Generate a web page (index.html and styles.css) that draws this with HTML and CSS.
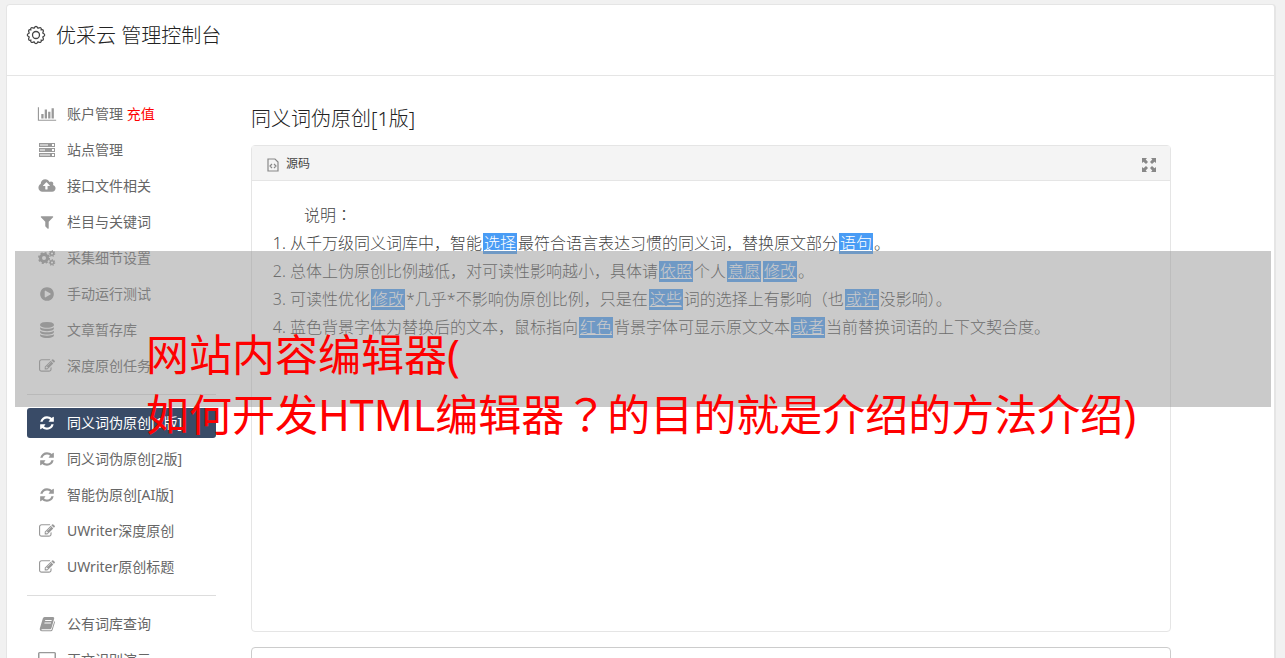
FILE: index.html
```html
<!DOCTYPE html>
<html lang="zh-CN">
<head>
  <meta charset="UTF-8">
  <meta name="viewport" content="width=device-width, initial-scale=1.0">
  <title>优采云 管理控制台</title>
  <link rel="stylesheet" href="styles.css">
</head>
<body>

  <!-- shared icons -->
  <svg class="sprite" aria-hidden="true">
    <symbol id="i-refresh" viewBox="0 0 1792 1792"><path d="M1639 1056q0 5-1 7-64 268-268 434.500t-478 166.500q-146 0-282.500-55t-243.500-157l-129 129q-19 19-45 19t-45-19-19-45v-448q0-26 19-45t45-19h448q26 0 45 19t19 45-19 45l-137 137q71 66 161 102t187 36q134 0 250-65t186-179q11-17 53-117 8-23 30-23h192q13 0 22.500 9.500t9.500 22.500zm25-800v448q0 26-19 45t-45 19h-448q-26 0-45-19t-19-45 19-45l138-138q-148-137-349-137-134 0-250 65t-186 179q-11 17-53 117-8 23-30 23h-199q-13 0-22.500-9.500t-9.500-22.500v-7q65-268 270-434.500t480-166.500q146 0 284 55.500t245 156.500l130-129q19-19 45-19t45 19 19 45z"/></symbol>
    <symbol id="i-edit" viewBox="0 0 1792 1792"><path d="M888 1184l116-116-152-152-116 116v56h96v96h56zm440-720q-16-16-33 1l-350 350q-17 17-1 33t33-1l350-350q17-17 1-33zm80 594v190q0 119-84.500 203.500t-203.500 84.500h-832q-119 0-203.500-84.500t-84.500-203.500v-832q0-119 84.500-203.500t203.500-84.500h832q63 0 117 25 15 7 18 23 3 17-9 29l-49 49q-14 14-32 8-23-6-45-6h-832q-66 0-113 47t-47 113v832q0 66 47 113t113 47h832q66 0 113-47t47-113v-126q0-13 9-22l64-64q15-15 35-7t20 29zm-96-738l288 288-672 672h-288v-288zm444 132l-92 92-288-288 92-92q28-28 68-28t68 28l152 152q28 28 28 68t-28 68z"/></symbol>
  </svg>

  <div class="page">
    <header class="page-header">
      <svg class="header-icon" viewBox="0 0 20 20" aria-hidden="true">
        <path d="M8 3.200Q10-.600 12 3.200Q15.800 1.500 15.200 4.800Q18.500 4.200 16.800 8Q20.600 10 16.800 12Q18.500 15.800 15.200 15.200Q15.800 18.500 12 16.800Q10 20.600 8 16.800Q4.200 18.500 4.800 15.200Q1.500 15.800 3.200 12Q-.600 10 3.200 8Q1.500 4.200 4.800 4.800Q4.200 1.500 8 3.200Z"/>
        <circle cx="10" cy="10" r="3.500"/>
      </svg>
      <h1>优采云 管理控制台</h1>
    </header>

    <div class="content">
      <nav class="sidebar">
        <ul>
          <li><a href="#">
            <svg viewBox="0 0 2048 1792"><path d="M640 896v512h-256v-512h256zm384-512v1024h-256v-1024h256zm1024 1152v128h-2048v-1536h128v1408h1920zm-640-896v768h-256v-768h256zm384-384v1152h-256v-1152h256z"/></svg>
            <span>账户管理 <em>充值</em></span></a></li>
          <li><a href="#">
            <svg viewBox="0 0 18 16"><path fill-rule="evenodd" d="M1 1h16v4H1zM2 2.500v1h8v-1zM14 2v2h2V2zM1 6h16v4H1zM2 7.500v1h5v-1zM14 7v2h2V7zM1 11h16v4H1zM2 12.500v1h10v-1zM14 12v2h2v-2z"/></svg>
            <span>站点管理</span></a></li>
          <li><a href="#">
            <svg viewBox="-64 0 1920 1792"><path d="M1216 864q0-14-9-23l-352-352q-9-9-23-9t-23 9l-351 351q-10 12-10 24 0 14 9 23t23 9h224v352q0 13 9.500 22.500t22.500 9.500h192q13 0 22.500-9.500t9.500-22.500v-352h224q13 0 22.500-9.500t9.500-22.500zm640 288q0 159-112.500 271.500t-271.500 112.500h-1088q-185 0-316.500-131.500T-64 1088q0-130 70-240t188-165q-2-30-2-43 0-212 150-362t362-150q156 0 285.500 87t188.500 231q71-62 166-62 106 0 181 75t75 181q0 76-41 138 130 31 213.500 135.500T1856 1152z"/></svg>
            <span>接口文件相关</span></a></li>
          <li><a href="#">
            <svg viewBox="0 0 1792 1792"><path d="M1595 295q17 41-14 70l-493 493v742q0 42-39 59-13 5-25 5-27 0-45-19l-256-256q-19-19-19-45v-486l-493-493q-31-29-14-70 17-39 59-39h1280q42 0 59 39z"/></svg>
            <span>栏目与关键词</span></a></li>
          <li><a href="#">
            <svg class="gears" viewBox="0 0 18 16"><circle cx="6" cy="8" r="3.500" stroke-width="3"/><circle class="teeth" cx="6" cy="8" r="5" stroke-width="2" stroke-dasharray="2 1.930"/><circle cx="14" cy="3.500" r="1.800" stroke-width="1.400"/><circle class="teeth" cx="14" cy="3.500" r="2.700" stroke-width="1.200" stroke-dasharray="1.200 1.220"/><circle cx="14" cy="12.500" r="1.800" stroke-width="1.400"/><circle class="teeth" cx="14" cy="12.500" r="2.700" stroke-width="1.200" stroke-dasharray="1.200 1.220"/></svg>
            <span>采集细节设置</span></a></li>
          <li><a href="#">
            <svg viewBox="0 0 1792 1792"><path d="M896 128q209 0 385.500 103t279.500 279.500 103 385.500-103 385.500-279.500 279.500-385.500 103-385.500-103-279.500-279.500-103-385.500 103-385.500 279.500-279.500 385.500-103zm384 823q32-18 32-55t-32-55l-544-320q-31-19-64-1-32 19-32 56v640q0 37 32 56 16 8 32 8 17 0 32-9z"/></svg>
            <span>手动运行测试</span></a></li>
          <li><a href="#">
            <svg viewBox="0 0 1792 1792"><path d="M896 768q237 0 443-43t325-127v170q0 69-103 128t-280 93.500-385 34.500-385-34.500-280-93.500-103-128v-170q119 84 325 127t443 43zm0 768q237 0 443-43t325-127v170q0 69-103 128t-280 93.500-385 34.500-385-34.500-280-93.500-103-128v-170q119 84 325 127t443 43zm0-384q237 0 443-43t325-127v170q0 69-103 128t-280 93.500-385 34.500-385-34.500-280-93.500-103-128v-170q119 84 325 127t443 43zm0-1152q208 0 385 34.500t280 93.500 103 128v128q0 69-103 128t-280 93.500-385 34.500-385-34.500-280-93.500-103-128v-128q0-69 103-128t280-93.500 385-34.500z"/></svg>
            <span>文章暂存库</span></a></li>
          <li><a href="#"><svg><use href="#i-edit"/></svg><span>深度原创任务</span></a></li>
        </ul>
        <hr>
        <ul>
          <li><a href="#" class="active"><svg><use href="#i-refresh"/></svg><span>同义词伪原创[1版]</span></a></li>
          <li><a href="#"><svg><use href="#i-refresh"/></svg><span>同义词伪原创[2版]</span></a></li>
          <li><a href="#"><svg><use href="#i-refresh"/></svg><span>智能伪原创[AI版]</span></a></li>
          <li><a href="#"><svg><use href="#i-edit"/></svg><span>UWriter深度原创</span></a></li>
          <li><a href="#"><svg><use href="#i-edit"/></svg><span>UWriter原创标题</span></a></li>
        </ul>
        <hr>
        <ul>
          <li><a href="#">
            <svg viewBox="0 0 16 16"><path fill-rule="evenodd" d="M5.500 1H14q1.500.200 1.200 1.500L12.500 12q-.400 1.200-1.500 1.200H3.200q-1 0-.900.600.200.500 1 .500h8.400q.800 0 1-.700L15.400 5q.800.600.500 1.500l-2.400 7.800q-.400 1-1.500 1H3Q.500 15.200.800 12.500L3.800 2.500Q4.200 1 5.500 1zM6.300 4l-.300 1h6.500l.300-1zM5.600 6.400l-.300 1h6.500l.300-1z"/></svg>
            <span>公有词库查询</span></a></li>
          <li><a href="#">
            <svg viewBox="0 0 18 16"><path fill-rule="evenodd" d="M1.500 0h15Q18 0 18 1.500v10q0 1.500-1.500 1.500H11l1 2v1H6v-1l1-2H1.500Q0 13 0 11.500v-10Q0 0 1.500 0zM1.500 1.200v8.600h15V1.200z"/></svg>
            <span>正文识别演示</span></a></li>
        </ul>
      </nav>

      <main class="main">
        <h2>同义词伪原创[1版]</h2>

        <section class="editor">
          <div class="toolbar">
            <button type="button" class="btn-source">
              <svg viewBox="0 0 12 14" aria-hidden="true"><path d="M1 1h7l3 3v9H1zM5 6L3 8l2 2M7 6l2 2-2 2"/></svg>
              源码
            </button>
            <button type="button" class="btn-full" aria-label="全屏">
              <svg viewBox="0 0 14 14" aria-hidden="true"><path d="M0 0h5L3.700 1.500 6 4 4 6 1.500 3.700 0 5zM14 0v5l-1.500-1.300L10 6 8 4l2.300-2.500L9 0zM0 14V9l1.500 1.300L4 8l2 2-2.300 2.500L5 14zM14 14H9l1.300-1.500L8 10l2-2 2.500 2.300L14 9z"/></svg>
            </button>
          </div>
          <div class="editor-body">
            <p>说明<span class="mid" lang="zh-TW">：</span></p>
            <ol>
              <li>从千万级同义词库中，智能<u>选择</u>最符合语言表达习惯的同义词，替换原文部分<u>语句</u>。</li>
              <li>总体上伪原创比例越低，对可读性影响越小，具体请<u>依照</u>个人<u>意愿</u><u>修改</u>。</li>
              <li>可读性优化<u>修改</u>*几乎*不影响伪原创比例，只是在<u>这些</u>词的选择上有影响<span class="mid" lang="zh-TW">（</span>也<u>或许</u>没影响<span class="mid" lang="zh-TW">）</span>。</li>
              <li>蓝色背景字体为替换后的文本，鼠标指向<u>红色</u>背景字体可显示原文文本<u>或者</u>当前替换词语的上下文契合度。</li>
            </ol>
          </div>
        </section>

        <textarea class="result" aria-label="结果"></textarea>
      </main>
    </div>
  </div>

  <!-- caption over the page -->
  <div class="shade"></div>
  <div class="caption">网站内容编辑器(<br>如何开发HTML编辑器<span class="mid" lang="zh-TW">？</span>的目的就是介绍的方法介绍)</div>

</body>
</html>
```
FILE: styles.css
```css
* {
  box-sizing: border-box;
}

body {
  position: relative;
  height: 100vh;
  margin: 0;
  padding: 4px 9px 0 6px;
  overflow: hidden;
  background: #f1f1f1;
  color: #666;
  font-family: "Noto Sans", "Noto Sans CJK SC", sans-serif;
  font-size: 14px;
}

h1, h2 {
  margin: 0;
  color: #222;
  font-size: 20px;
  font-weight: 300;
  line-height: 30px;
}

ul, ol {
  margin: 0;
  padding: 0;
}

button {
  border: none;
  padding: 0;
  background: none;
  color: inherit;
  font: inherit;
  cursor: pointer;
}

/* punctuation centred in its square */
.mid {
  font-family: "Noto Sans CJK TC", sans-serif;
  line-height: 1;
}

.sprite {
  display: none;
}

.page {
  background: #fff;
  border: 1px solid #e5e5e5;
  border-right-width: 2px;
  border-radius: 4px;
}

.page-header {
  display: flex;
  gap: 10px;
  height: 71px;
  padding: 16px 19px;
  border-bottom: 1px solid #e5e5e5;
}

.header-icon {
  width: 20px;
  height: 20px;
  margin-top: 4px;
  fill: none;
  stroke: #444;
  stroke-width: 1.3;
}

.content {
  display: grid;
  grid-template-columns: 189px 1fr;
  gap: 35px;
  padding: 23px 103px 20px 20px;
}

.sidebar ul {
  display: flex;
  flex-direction: column;
  gap: 6px;
  list-style: none;
}

.sidebar a {
  display: flex;
  align-items: center;
  gap: 10px;
  height: 30px;
  padding: 0 10px;
  border-radius: 3px;
  color: #666;
  line-height: 30px;
  text-decoration: none;
  white-space: nowrap;
}

.sidebar svg {
  flex: none;
  width: 20px;
  height: 16px;
  fill: #999;
}

.sidebar .gears {
  fill: none;
  stroke: #999;
}

.sidebar em {
  color: #f00;
  font-style: normal;
}

.sidebar .active {
  background: #394b67;
  color: #fff;
}

.sidebar .active svg {
  fill: #fff;
}

.sidebar hr {
  height: 1px;
  margin: 13px 0;
  border: none;
  background: #ddd;
}

.main {
  padding-top: 5px;
}

.editor {
  height: 487px;
  margin-top: 11px;
  border: 1px solid #e5e5e5;
  border-radius: 4px;
}

.toolbar {
  display: flex;
  align-items: center;
  justify-content: space-between;
  height: 35px;
  padding: 0 14px 0 15px;
  border-bottom: 1px solid #e5e5e5;
  background: #f4f4f4;
}

.btn-source {
  display: flex;
  align-items: center;
  gap: 7px;
  color: #444;
  font-size: 12px;
}

.btn-source svg {
  width: 12px;
  height: 14px;
  margin-top: 3px;
  fill: none;
  stroke: #888;
  stroke-width: 1.2;
}

.btn-full svg {
  display: block;
  width: 14px;
  height: 14px;
  margin-top: 4px;
  fill: #888;
}

.editor-body {
  padding: 20px;
  font-size: 16px;
  font-weight: 300;
  line-height: 28px;
  color: #444;
}

.editor-body p {
  margin: 0;
  text-indent: 32px;
}

.editor-body ol {
  padding-left: 18px;
}

.editor-body u {
  margin: 0 1px;
  padding: 0 1px;
  background: linear-gradient(#499cf5, #499cf5) center / 100% 21px no-repeat;
  color: #fff;
}

.result {
  display: block;
  width: 100%;
  height: 200px;
  margin-top: 15px;
  border: 1px solid #ccc;
  border-radius: 4px;
  resize: none;
}

.shade {
  position: absolute;
  top: 251px;
  left: 15px;
  right: 14px;
  height: 156px;
  background: rgba(150, 150, 150, 0.5);
}

.caption {
  position: absolute;
  top: 325px;
  left: 146px;
  color: #f00;
  font-size: 43px;
  line-height: 60px;
  white-space: nowrap;
}
```
